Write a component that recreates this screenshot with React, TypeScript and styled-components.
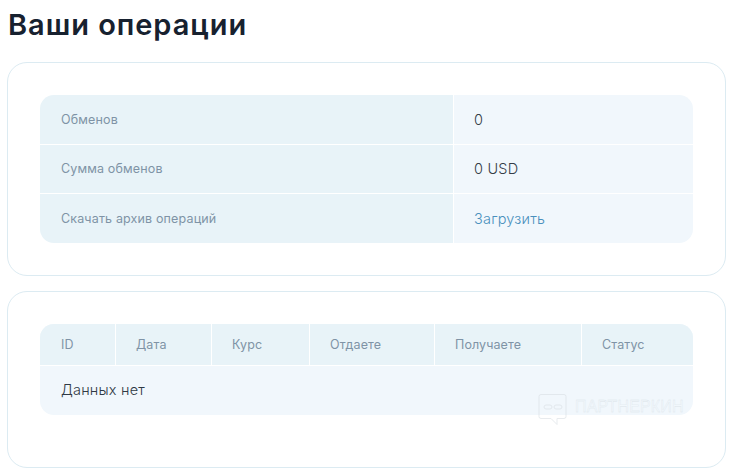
import { createGlobalStyle, styled } from 'styled-components';

const GlobalStyle = createGlobalStyle`
  html, body {
    margin: 0;
    padding: 0;
    background: #ffffff;
    font-family: Inter, "Noto Sans", "Liberation Sans", sans-serif;
  }
`;

const Page = styled.div`
  position: relative;
  width: 734px;
  height: 476px;
  overflow: hidden;
  padding: 8px 8px 0 7px;
  box-sizing: border-box;
`;

const Title = styled.h1`
  margin: 0 0 20px 1px;
  height: 34px;
  line-height: 34px;
  font-size: 29px;
  font-weight: 600;
  letter-spacing: 0.95px;
  color: #17212f;
`;

const Card = styled.section<{ $height: number; $gap?: number }>`
  box-sizing: border-box;
  width: 719px;
  height: ${(p) => p.$height}px;
  margin-bottom: ${(p) => p.$gap ?? 0}px;
  padding: 32px;
  border: 1px solid #dcebf2;
  border-radius: 20px;
  background: #ffffff;
`;

const InfoTable = styled.div`
  width: 653px;
  border-radius: 14px;
  overflow: hidden;
`;

const InfoRow = styled.div`
  display: grid;
  grid-template-columns: 414px 1fr;
  height: 49px;
  border-bottom: 1px solid #ffffff;
  box-sizing: border-box;

  &:first-child {
    height: 50px;
  }

  &:last-child {
    border-bottom: 0;
  }
`;

const InfoLabel = styled.div`
  display: flex;
  align-items: center;
  padding: 0 0 1px 21px;
  background: #e8f3f8;
  border-right: 1px solid #ffffff;
  font-size: 12.5px;
  letter-spacing: 0.15px;
  color: #7f93a6;
`;

const InfoValue = styled.div<{ $link?: boolean }>`
  display: flex;
  align-items: center;
  padding: 0 0 1px 20px;
  background: #f1f7fc;
  font-size: 14.5px;
  font-weight: 350;
  letter-spacing: 0.2px;
  color: ${(p) => (p.$link ? '#4a90bd' : '#343d48')};
`;

const OpsTable = styled.div`
  width: 653px;
  border-radius: 14px;
  overflow: hidden;
  background: #f1f7fc;
`;

const HeadRow = styled.div`
  display: grid;
  grid-template-columns: 76px 96px 98px 125px 147px 1fr;
  height: 42px;
  border-bottom: 1px solid #ffffff;
  box-sizing: border-box;
  background: #e8f3f8;
`;

const HeadCell = styled.div`
  display: flex;
  align-items: center;
  padding-left: 20px;
  border-right: 1px solid #ffffff;
  font-size: 12.5px;
  letter-spacing: 0.1px;
  color: #7f93a6;

  &:first-child {
    padding-left: 21px;
  }

  &:last-child {
    border-right: 0;
  }
`;

const EmptyRow = styled.div`
  box-sizing: border-box;
  height: 49px;
  display: flex;
  align-items: center;
  padding: 0 0 2px 21px;
  font-size: 14.5px;
  font-weight: 350;
  letter-spacing: 0.2px;
  color: #2f3944;
`;

const Watermark = styled.div`
  position: absolute;
  left: 538px;
  top: 394px;
  display: flex;
  align-items: flex-start;
  gap: 7px;
  opacity: 0.6;
`;

const WatermarkText = styled.span`
  margin-top: 4px;
  font-family: "Liberation Sans", sans-serif;
  font-size: 16px;
  line-height: 18px;
  letter-spacing: 0.15px;
  color: transparent;
  -webkit-text-stroke: 0.3px #cfd7dd;
`;

function WatermarkIcon() {
  return (
    <svg width="30" height="32" viewBox="0 0 30 32" fill="none" stroke="#d9dfe4" strokeWidth="1">
      <path d="M3 .5h23a2 2 0 0 1 2 2v20a2 2 0 0 1-2 2h-7v6l-6-6H3a2 2 0 0 1-2-2v-20a2 2 0 0 1 2-2z" />
      <rect x="6" y="11" width="8" height="4" rx="2" />
      <rect x="16" y="11" width="8" height="4" rx="2" />
    </svg>
  );
}

const infoRows = [
  { label: 'Обменов', value: '0' },
  { label: 'Сумма обменов', value: '0 USD' },
  { label: 'Скачать архив операций', value: 'Загрузить', link: true },
];

const columns = ['ID', 'Дата', 'Курс', 'Отдаете', 'Получаете', 'Статус'];

export default function App() {
  return (
    <Page>
      <GlobalStyle />
      <Title>Ваши операции</Title>
      <Card $height={214} $gap={15}>
        <InfoTable>
          {infoRows.map((row) => (
            <InfoRow key={row.label}>
              <InfoLabel>{row.label}</InfoLabel>
              <InfoValue $link={row.link}>{row.value}</InfoValue>
            </InfoRow>
          ))}
        </InfoTable>
      </Card>
      <Card $height={177}>
        <OpsTable>
          <HeadRow>
            {columns.map((name) => (
              <HeadCell key={name}>{name}</HeadCell>
            ))}
          </HeadRow>
          <EmptyRow>Данных нет</EmptyRow>
        </OpsTable>
      </Card>
      <Watermark>
        <WatermarkIcon />
        <WatermarkText>ПАРТНЕРКИН</WatermarkText>
      </Watermark>
    </Page>
  );
}
